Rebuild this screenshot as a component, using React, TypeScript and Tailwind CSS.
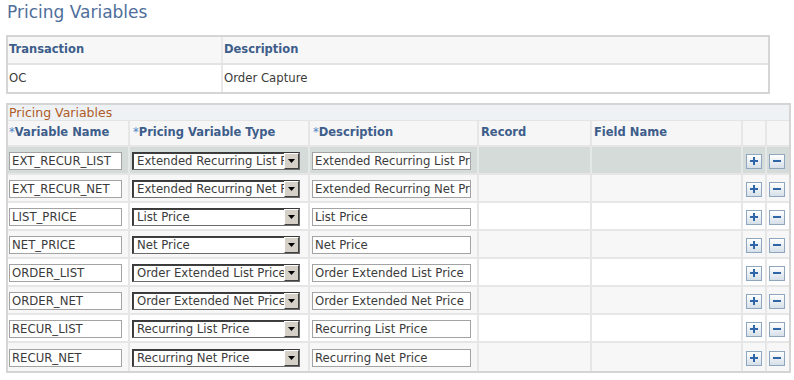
import React from "react";

const rows: [string, string, string][] = [
  ["EXT_RECUR_LIST", "Extended Recurring List Price", "Extended Recurring List Price"],
  ["EXT_RECUR_NET", "Extended Recurring Net Price", "Extended Recurring Net Price"],
  ["LIST_PRICE", "List Price", "List Price"],
  ["NET_PRICE", "Net Price", "Net Price"],
  ["ORDER_LIST", "Order Extended List Price", "Order Extended List Price"],
  ["ORDER_NET", "Order Extended Net Price", "Order Extended Net Price"],
  ["RECUR_LIST", "Recurring List Price", "Recurring List Price"],
  ["RECUR_NET", "Recurring Net Price", "Recurring Net Price"],
];

function PlusBtn() {
  return (
    <div className="w-[16px] h-[15px] border border-[#8ea6bf] bg-gradient-to-b from-[#ffffff] to-[#d6e0e8] flex items-center justify-center">
      <svg width="10" height="10" viewBox="0 0 10 10">
        <rect x="1" y="4" width="8" height="2" fill="#2f66a8" />
        <rect x="4" y="1" width="2" height="8" fill="#2f66a8" />
      </svg>
    </div>
  );
}

function MinusBtn() {
  return (
    <div className="w-[16px] h-[15px] border border-[#8ea6bf] bg-gradient-to-b from-[#ffffff] to-[#d6e0e8] flex items-center justify-center">
      <svg width="10" height="10" viewBox="0 0 10 10">
        <rect x="1" y="4" width="8" height="2" fill="#2f66a8" />
      </svg>
    </div>
  );
}

function Select({ value }: { value: string }) {
  return (
    <div className="w-[168px] h-[18px] flex border border-[#6b6b6b] border-t-[#3a3a3a] border-l-[#3a3a3a] shadow-[inset_1px_1px_0_#404040] bg-white">
      <div className="flex-1 overflow-hidden whitespace-nowrap pl-[4px] leading-[16px] text-[#3b3b3b]">
        {value}
      </div>
      <div className="w-[15px] h-[16px] bg-[#d4d0c8] border-t border-l border-t-white border-l-white border-b border-r border-b-[#404040] border-r-[#404040] flex items-center justify-center">
        <svg width="7" height="4" viewBox="0 0 7 4">
          <polygon points="0,0 7,0 3.5,4" fill="#000" />
        </svg>
      </div>
    </div>
  );
}

function TextBox({ value, w }: { value: string; w: string }) {
  return (
    <div className={`${w} h-[18px] border border-[#a3a3a3] bg-white overflow-hidden whitespace-nowrap pl-[2px] leading-[16px] text-[#3b3b3b]`}>
      {value}
    </div>
  );
}

export default function App() {
  const font = { fontFamily: '"DejaVu Sans", Verdana, sans-serif' };
  const cell = "border-r-2 border-[#e6e6e6] flex items-center";
  return (
    <div className="w-[794px] h-[380px] bg-white text-[11.7px]" style={font}>
      <div className="h-[35px] pl-[7px] pt-[2px] text-[17px] leading-[20px] text-[#4f6e9a]">
        Pricing Variables
      </div>

      <div className="ml-[6px] w-[764px] border-2 border-[#d5d5d5]">
        <div className="grid grid-cols-[215px_1fr] h-[28px] bg-[#f7f7f7] border-b-2 border-[#e3e3e3] font-bold text-[11.5px] text-[#3d5d8a]">
          <div className="border-r-2 border-[#e8e8e8] flex items-center pl-[1px]">Transaction</div>
          <div className="flex items-center pl-[1px]">Description</div>
        </div>
        <div className="grid grid-cols-[215px_1fr] h-[27px] text-[#3b3b3b]">
          <div className="border-r-2 border-[#e8e8e8] flex items-center pl-[1px]">OC</div>
          <div className="flex items-center pl-[1px]">Order Capture</div>
        </div>
      </div>

      <div className="ml-[6px] mt-[9px] w-[785px] border-2 border-[#d5d5d5]">
        <div className="h-[15px] bg-[#eef2f4] text-[#b15b26] text-[12.5px] leading-[15px] pl-[1px]">
          Pricing Variables
        </div>
        <div className="grid grid-cols-[122px_180px_169px_113px_151px_24px_22px] h-[27px] bg-[#f6f6f6] border-t border-[#e4e4e4] border-b-2 border-b-[#e6e6e6] font-bold text-[11.5px] text-[#3d5d8a]">
          <div className={`${cell} pl-[1px]`}>
            <span className="text-[#4f86c6] font-normal">*</span>Variable Name
          </div>
          <div className={`${cell} pl-[3px]`}>
            <span className="text-[#4f86c6] font-normal">*</span>Pricing Variable Type
          </div>
          <div className={`${cell} pl-[3px]`}>
            <span className="text-[#4f86c6] font-normal">*</span>Description
          </div>
          <div className={`${cell} pl-[2px]`}>Record</div>
          <div className={`${cell} pl-[2px]`}>Field Name</div>
          <div className={cell}></div>
          <div className="flex items-center"></div>
        </div>
        {rows.map((r, i) => {
          const bg = i === 0 ? "bg-[#d5dbd9]" : i % 2 === 1 ? "bg-[#f7f7f7]" : "bg-white";
          const last = i === rows.length - 1;
          const c = i === 0 ? "border-r-2 border-[#e4e8e6] flex items-center pt-[2px]" : "border-r-2 border-[#e6e6e6] flex items-center pt-[2px]";
          return (
            <div
              key={r[0]}
              className={`grid grid-cols-[122px_180px_169px_113px_151px_24px_22px] h-[28px] ${bg} ${last ? "" : "border-b-2 border-[#e6e6e6]"}`}
            >
              <div className={`${c} pl-[1px]`}>
                <TextBox value={r[0]} w="w-[113px]" />
              </div>
              <div className={`${c} pl-[2px]`}>
                <Select value={r[1]} />
              </div>
              <div className={`${c} pl-[2px]`}>
                <TextBox value={r[2]} w="w-[159px]" />
              </div>
              <div className={c}></div>
              <div className={c}></div>
              <div className={`${c} pl-[3px]`}>
                <PlusBtn />
              </div>
              <div className="flex items-center pt-[2px] pl-[2px]">
                <MinusBtn />
              </div>
            </div>
          );
        })}
      </div>
    </div>
  );
}
